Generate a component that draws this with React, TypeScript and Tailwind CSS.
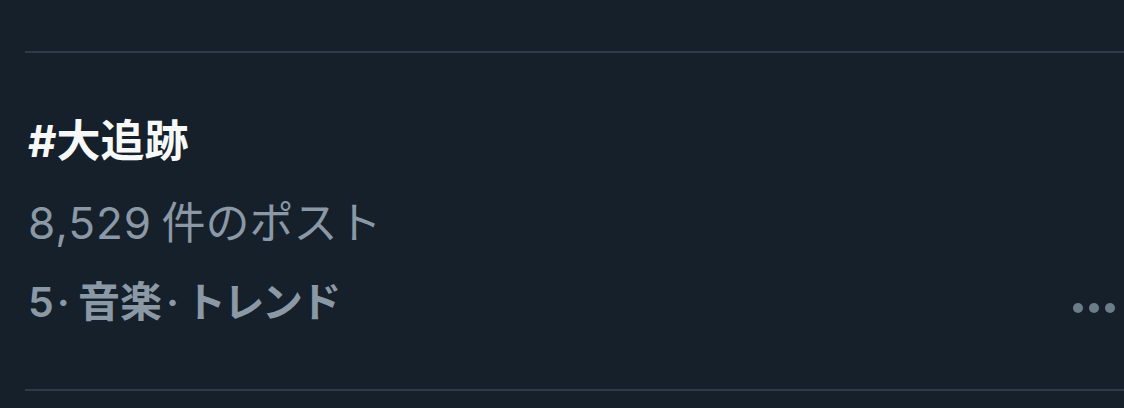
import React from "react";

export default function App() {
  const font = { fontFamily: '"Inter", "Noto Sans CJK JP", sans-serif' };
  return (
    <div
      className="w-[1124px] h-[408px] bg-[#15202b] overflow-hidden"
      style={font}
    >
      <div className="pt-[51px] pl-[25px]">
        <div className="border-t-2 border-[#2f3b46]" />
        <div className="relative pl-[3px] pt-[62px] pb-[64px]">
          <div className="text-[44px] leading-[52px] font-bold text-[#f7f9f9]">
            #大追跡
          </div>
          <div className="mt-[30px] text-[44px] leading-[52px] font-normal text-[#8b98a5]">
            <span className="tracking-[1px]">8,529</span>
            <span className="ml-[-3px]"> 件のポスト</span>
          </div>
          <div className="mt-[30px] flex items-baseline text-[41px] leading-[46px] font-semibold text-[#8b98a5]">
            <span>5</span>
            <span className="ml-[3px] mr-[8px]">·</span>
            <span className="text-[42px]">音楽</span>
            <span className="ml-[4px] mr-[6px]">·</span>
            <span className="tracking-[-2.5px]">トレンド</span>
          </div>
          <div className="absolute right-[9px] top-[250px] flex gap-[6px]">
            <span className="block w-[10px] h-[10px] rounded-full bg-[#6e7b88]" />
            <span className="block w-[10px] h-[10px] rounded-full bg-[#6e7b88]" />
            <span className="block w-[10px] h-[10px] rounded-full bg-[#6e7b88]" />
          </div>
        </div>
        <div className="border-t-2 border-[#2f3b46]" />
      </div>
    </div>
  );
}
